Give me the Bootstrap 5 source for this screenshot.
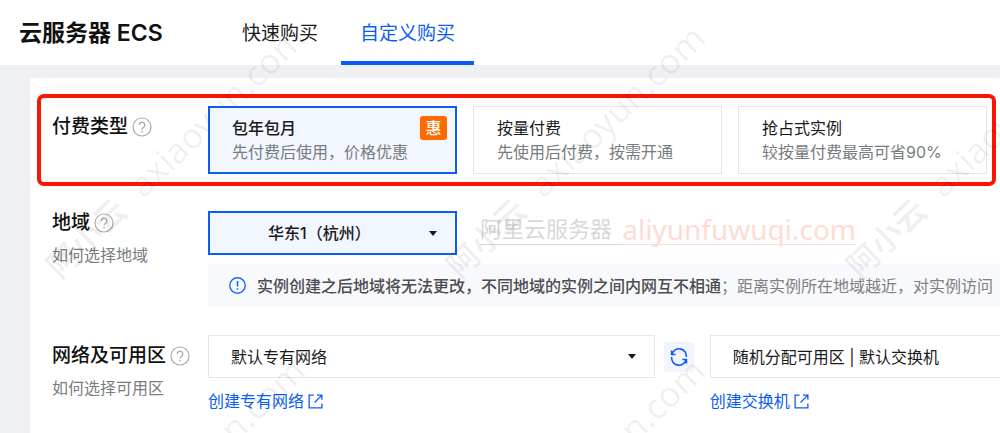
<!DOCTYPE html>
<html lang="zh-CN">
<head>
<meta charset="utf-8">
<meta name="viewport" content="width=device-width, initial-scale=1">
<title>云服务器 ECS</title>
<link href="https://cdn.jsdelivr.net/npm/bootstrap@5.3.0/dist/css/bootstrap.min.css" rel="stylesheet">
<style>
  :root { --ecs-blue: #0a5cf5; --ecs-line: #e6e6e6; --ecs-tint: #f2f6fe; }
  body { font-family: Inter, "Noto Sans CJK SC", sans-serif; font-size: 16px; line-height: 24px; color: #1a1a1a; background: #eff0f4; overflow-x: hidden; }
  .topbar { height: 65px; padding-left: 19px; }
  .topbar h1 { font-size: 23px; line-height: 30px; font-weight: 600; width: 204px; color: #111; }
  .topbar .nav-link { font-size: 19px; line-height: 24px; color: #1a1a1a; padding: 22px 19px 15px; border-bottom: 4px solid transparent; border-radius: 0; }
  .topbar .nav-link.active { color: var(--ecs-blue); border-color: var(--ecs-blue); }
  .panel { margin: 13px 0 0 30px; padding: 28px 0 40px 22px; min-height: calc(100vh - 78px); }
  .form-line { display: grid; grid-template-columns: 156px minmax(0, 1fr); }
  .pay-line { margin-bottom: 37px; }
  .pay-frame { inset: -12px 4px -12px -15px; border: 4px solid #fb1400; border-radius: 7px; pointer-events: none; }
  .tall-label { padding-top: 9px; }
  .line-title { font-size: 19px; line-height: 24px; font-weight: 500; color: #111; margin: 0; }
  .tip { color: #777d80; }
  .choices { gap: 16px; padding-right: 13px; }
  .choice { flex: 1 1 0; height: 68px; padding: 10px 24px; border: 0; box-shadow: inset 0 0 0 1px var(--ecs-line); cursor: pointer; white-space: nowrap; }
  .choice-name { color: #1a1a1a; }
  .btn-check:checked + .choice { background: var(--ecs-tint); box-shadow: inset 0 0 0 2px var(--ecs-blue); z-index: 2; }
  .btn-check:checked + .choice .choice-name { font-weight: 500; }
  .deal { top: 10px; right: 10px; width: 27px; height: 24px; background: #ff6a00; border-radius: 3px; color: #fff; font-weight: 500; text-align: center; }
  .form-select { height: 43px; border-color: var(--ecs-line); border-radius: 0; color: #1a1a1a; padding: 0 40px 0 22px; background-image: url("data:image/svg+xml,%3Csvg xmlns='http://www.w3.org/2000/svg' viewBox='0 0 8 5'%3E%3Cpath d='M0 0h8L4 5z' fill='%231a1a1a'/%3E%3C/svg%3E"); background-size: 8px 5px; background-position: right 18px center; }
  .region { width: 249px; height: 44px; border: 2px solid var(--ecs-blue); background-color: var(--ecs-tint); padding-left: 58px; font-weight: 500; }
  .site-mark { margin: 0 0 8px 23px; font-size: 22px; line-height: 30px; color: #d8d8d8; }
  .site-mark span, .site-mark a { border-bottom: 1px solid; text-decoration: none; white-space: pre; }
  .site-mark span { padding-right: 4px; }
  .site-mark a { font-family: "Noto Sans", sans-serif; font-size: 28px; color: #fddcd5; }
  .notice { height: 43px; margin-top: 9px; padding-left: 21px; gap: 11px; background: #f8f9fd; color: #808080; white-space: nowrap; }
  .notice strong { font-weight: 500; color: #4d4d4d; }
  .net-line { margin-top: 28px; }
  .net-grid { display: grid; grid-template-columns: 20fr auto 13fr; column-gap: 9px; row-gap: 11px; }
  .net-grid .open-end { border-right: 0; background-image: none; padding-right: 0; }
  .refresh { width: 30px; height: 30px; margin-right: 7px; padding: 0; border: 0; border-radius: 0; background: #f3f5fd; color: var(--ecs-blue); }
  .net-grid a { color: var(--ecs-blue); }
  .watermark { inset: 0; width: 100%; height: 100%; pointer-events: none; overflow: hidden; z-index: 1; }
</style>
</head>
<body class="position-relative">
<header class="topbar bg-white d-flex align-items-center">
  <h1 class="m-0">云服务器 ECS</h1>
  <nav class="nav flex-nowrap">
    <a class="nav-link" href="#quick">快速购买</a>
    <a class="nav-link active ms-1" href="#custom" aria-current="page">自定义购买</a>
  </nav>
</header>

<svg class="d-none">
  <symbol id="help" viewBox="0 0 20 20"><circle cx="10" cy="10" r="9" fill="none" stroke="#aaa" stroke-width="1.2"/><path d="M7.2 8a2.8 2.8 0 1 1 4.5 2.2c-1 .8-1.7 1.1-1.7 2.2" fill="none" stroke="#aaa" stroke-width="1.3"/><circle cx="10" cy="14.6" r=".9" fill="#aaa"/></symbol>
  <symbol id="out" viewBox="0 0 16 16"><path d="M6 1.2H1.2v13.6h13.6V10M9.6 1.2h5.2V6M14.8 1.2 7 9" fill="none" stroke="currentColor" stroke-width="1.4"/></symbol>
</svg>

<main class="panel bg-white">
  <section class="form-line pay-line position-relative">
    <div class="tall-label">
      <div class="d-flex align-items-center gap-1">
        <h2 class="line-title">付费类型</h2>
        <svg width="20" height="20" role="img" aria-label="帮助"><use href="#help"/></svg>
      </div>
    </div>
    <div class="choices d-flex">
      <input class="btn-check" type="radio" name="pay" id="pay-month" checked>
      <label class="choice position-relative" for="pay-month">
        <span class="choice-name d-block">包年包月</span>
        <span class="tip d-block">先付费后使用，价格优惠</span>
        <span class="deal position-absolute">惠</span>
      </label>
      <input class="btn-check" type="radio" name="pay" id="pay-use">
      <label class="choice" for="pay-use">
        <span class="choice-name d-block">按量付费</span>
        <span class="tip d-block">先使用后付费，按需开通</span>
      </label>
      <input class="btn-check" type="radio" name="pay" id="pay-spot">
      <label class="choice" for="pay-spot">
        <span class="choice-name d-block">抢占式实例</span>
        <span class="tip d-block">较按量付费最高可省90%</span>
      </label>
    </div>
    <div class="pay-frame position-absolute"></div>
  </section>

  <section class="form-line">
    <div>
      <div class="d-flex align-items-center gap-1 mb-2">
        <label class="line-title" for="region">地域</label>
        <svg width="20" height="20" role="img" aria-label="帮助"><use href="#help"/></svg>
      </div>
      <div class="tip">如何选择地域</div>
    </div>
    <div>
      <div class="d-flex align-items-center">
        <select class="form-select region" id="region"><option>华东1（杭州）</option></select>
        <div class="site-mark d-flex align-items-end"><span>阿里云服务器 </span><a href="#site">aliyunfuwuqi.com</a></div>
      </div>
      <div class="notice d-flex align-items-center overflow-hidden">
        <svg class="flex-shrink-0" width="17" height="17" viewBox="0 0 17 17"><circle cx="8.5" cy="8.5" r="7.7" fill="none" stroke="#1a66ff" stroke-width="1.4"/><path d="M8.5 4v5.6M8.5 11.2v1.6" stroke="#1a66ff" stroke-width="1.6"/></svg>
        <span><strong>实例创建之后地域将无法更改，不同地域的实例之间内网互不相通</strong>；距离实例所在地域越近，对实例访问</span>
      </div>
    </div>
  </section>

  <section class="form-line net-line">
    <div class="tall-label">
      <div class="d-flex align-items-center gap-1 mb-2">
        <label class="line-title" for="vpc">网络及可用区</label>
        <svg width="20" height="20" role="img" aria-label="帮助"><use href="#help"/></svg>
      </div>
      <div class="tip">如何选择可用区</div>
    </div>
    <div class="net-grid align-items-center">
      <select class="form-select" id="vpc"><option>默认专有网络</option></select>
      <button class="btn refresh d-flex align-items-center justify-content-center" type="button" aria-label="刷新">
        <svg width="18" height="18" viewBox="0 0 18 18" fill="none" stroke="currentColor" stroke-width="1.6"><path d="M1.6 2.5v4h4M2 6.2A7.3 7.3 0 0 1 16.3 9M16.4 15.5v-4h-4M16 11.8A7.3 7.3 0 0 1 1.7 9"/></svg>
      </button>
      <select class="form-select open-end" id="vswitch" aria-label="交换机"><option>随机分配可用区 | 默认交换机</option></select>
      <a class="d-flex align-items-center gap-1 text-decoration-none" href="#new-vpc">创建专有网络<svg width="15" height="15"><use href="#out"/></svg></a>
      <span></span>
      <a class="d-flex align-items-center gap-1 text-decoration-none" href="#new-switch">创建交换机<svg width="15" height="15"><use href="#out"/></svg></a>
    </div>
  </section>
</main>

<svg class="watermark position-absolute" aria-hidden="true" font-family="'Noto Sans', 'Noto Sans CJK SC', sans-serif" font-size="35" fill="#000" fill-opacity=".06">
  <defs><g id="mark"><text transform="rotate(-44)"><tspan font-size="32" font-weight="700" font-family="'Noto Sans CJK SC', sans-serif">阿小云</tspan><tspan dx="20">axiaoyun.com</tspan></text></g></defs>
  <use href="#mark" x="60" y="280"/><use href="#mark" x="460" y="280"/><use href="#mark" x="860" y="280"/>
  <use href="#mark" x="60" y="613"/><use href="#mark" x="460" y="613"/><use href="#mark" x="860" y="613"/>
</svg>
<script src="https://cdn.jsdelivr.net/npm/bootstrap@5.3.0/dist/js/bootstrap.bundle.min.js"></script>
</body>
</html>
